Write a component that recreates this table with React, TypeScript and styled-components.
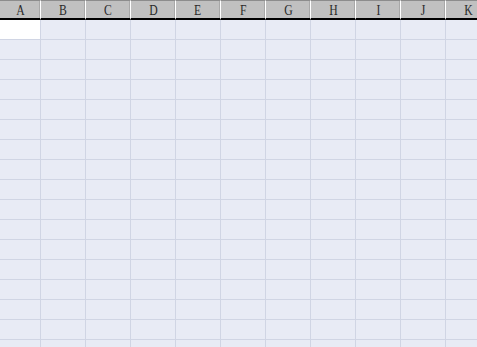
import React from "react";
import styled, { createGlobalStyle } from "styled-components";

const Global = createGlobalStyle`
  html, body { margin: 0; padding: 0; background: #e8ebf5; overflow: hidden; }
  #root { width: 477px; height: 347px; overflow: hidden; }
`;

const COLS = ["A", "B", "C", "D", "E", "F", "G", "H", "I", "J", "K"];
const ROWS = 17;

const Sheet = styled.div`
  display: grid;
  grid-template-columns: 41px repeat(10, 45px);
  width: max-content;
`;

const HeaderCell = styled.div`
  box-sizing: border-box;
  height: 20px;
  background: #c0c0c0;
  border-top: 1px solid #8c8c8c;
  border-bottom: 2px solid #000;
  border-right: 1px solid #ffffff;
  box-shadow: inset -1px 0 0 #a8a8a8;
  display: flex;
  align-items: center;
  justify-content: center;
  padding-top: 1px;
`;

const Label = styled.span`
  display: inline-block;
  font-family: "Liberation Serif", "DejaVu Serif", serif;
  font-size: 15px;
  font-weight: 400;
  color: #2a2a2a;
  line-height: 1;
  transform: scaleX(0.78);
`;

const Cell = styled.div<{ $active?: boolean }>`
  box-sizing: border-box;
  height: 20px;
  background: ${(p) => (p.$active ? "#ffffff" : "#e8ebf5")};
  border-right: 1px solid #d0d5e4;
  border-bottom: 1px solid #d0d5e4;
`;

export default function App() {
  return (
    <>
      <Global />
      <Sheet>
        {COLS.map((c) => (
          <HeaderCell key={c}>
            <Label>{c}</Label>
          </HeaderCell>
        ))}
        {Array.from({ length: ROWS }).map((_, r) =>
          COLS.map((c, ci) => (
            <Cell key={`${r}-${c}`} $active={r === 0 && ci === 0} />
          ))
        )}
      </Sheet>
    </>
  );
}
